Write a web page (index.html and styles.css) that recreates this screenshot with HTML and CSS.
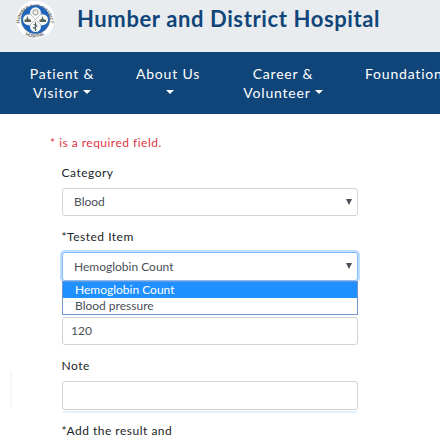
FILE: index.html
```html
<!DOCTYPE html>
<html lang="en">
<head>
<meta charset="utf-8">
<title>Humber and District Hospital</title>
<link rel="stylesheet" href="styles.css">
</head>
<body>
<header class="brand">
  <svg class="logo" viewBox="0 0 40 40" width="40" height="40" aria-hidden="true">
    <defs>
      <path id="arc-top" d="M5.200 26A15.400 15.400 0 1 1 34.800 26"/>
      <path id="arc-bottom" d="M9 33.200Q20 39.800 31 33.200"/>
    </defs>
    <circle cx="20.500" cy="18.500" r="19" fill="#fff"/>
    <text class="seal"><textPath href="#arc-top" startOffset="50%" text-anchor="middle">HUMBER AND DISTRICT</textPath></text>
    <text class="seal"><textPath href="#arc-bottom" startOffset="50%" text-anchor="middle">HOSPITAL</textPath></text>
    <circle cx="20.500" cy="18.500" r="14.300" fill="#1e66bd" stroke="#53697c" stroke-width=".6"/>
    <g fill="#f7f8f5">
      <circle cx="20.500" cy="11.800" r="5.500"/><circle cx="13.500" cy="18.700" r="5.500"/>
      <circle cx="27.500" cy="18.700" r="5.500"/><circle cx="20.500" cy="25.600" r="5.500"/>
      <path d="M16 14h9v9h-9z"/>
    </g>
    <path d="M14 12l13 13M27 12L14 25" stroke="#b4b9b5" stroke-width=".7"/>
    <circle cx="20.500" cy="11.300" r="2.600" fill="#eef0e8" stroke="#858e83" stroke-width=".9"/>
    <path d="M9.500 21v-2l2-1 1-3 1 3 2.500 1v2zM24.500 21v-2l2-1 1-3 1 3 2.500 1v2z" fill="#59665c"/>
    <path d="M20.500 21v9M18.500 23.500q4 0 3.500 1.500t-3 1.500 2.500 2" fill="none" stroke="#4f6565" stroke-width="1"/>
  </svg>
  <h1 class="title">Humber and District Hospital</h1>
</header>
<nav class="nav">
  <a class="item patient">Patient &amp;<br>Visitor<i class="caret"></i></a>
  <a class="item about">About Us<br><i class="caret alone"></i></a>
  <a class="item career">Career &amp;<br>Volunteer<i class="caret"></i></a>
  <a class="item foundation">Foundation</a>
</nav>
<main class="content">
  <div class="side-mark"></div>
  <p class="required">* is a required field.</p>
  <form class="form">
    <label class="label">Category</label>
    <div class="control select">Blood<i class="arrow"></i></div>
    <label class="label tested">*Tested Item</label>
    <div class="control select focused">Hemoglobin Count<i class="arrow"></i>
      <div class="menu">
        <div class="option active">Hemoglobin Count</div>
        <div class="option">Blood pressure</div>
      </div>
    </div>
    <div class="control result">120</div>
    <label class="label note">Note</label>
    <div class="control note-input"></div>
    <div class="underline"></div>
    <label class="label add">*Add the result and</label>
  </form>
</main>
</body>
</html>
```
FILE: styles.css
```css
* { box-sizing: border-box; }
body {
  margin: 0;
  width: 440px;
  height: 440px;
  overflow: hidden;
  background: #fff;
  color: #212529;
  font-family: Lato, "Liberation Sans", sans-serif;
}
.brand {
  display: flex;
  height: 52px;
  padding-left: 15px;
  background: #e9ecef;
}
.logo { flex: none; margin-top: 1px; }
.seal { font-size: 4.3px; font-weight: 700; fill: #51534a; }
.title {
  margin: 4px 0 0 22px;
  color: #104579;
  font-size: 22px;
  font-weight: 700;
  line-height: 30px;
  letter-spacing: .61px;
  white-space: nowrap;
}
.nav {
  display: flex;
  height: 62px;
  padding-top: 12px;
  background: #104579;
}
.item {
  flex: none;
  color: #fff;
  font-size: 14px;
  line-height: 19px;
  letter-spacing: .8px;
  text-align: center;
  white-space: nowrap;
}
.patient { width: 80px; margin-left: 22px; }
.about { width: 80px; margin-left: 26px; }
.career { width: 90px; margin-left: 30px; }
.foundation { margin-left: 37px; }
.caret {
  display: inline-block;
  margin-left: 4px;
  vertical-align: 4px;
  border: 4px solid transparent;
  border-top-color: #fff;
  border-bottom: 0;
}
.caret.alone { margin-left: 4px; }
.content { position: relative; height: 326px; padding: 21px 0 0 50px; }
.side-mark {
  position: absolute;
  left: 10px;
  top: 257px;
  width: 2px;
  height: 38px;
  background: #f7f7f8;
}
.required {
  margin: 0;
  color: #dc3545;
  font-size: 12px;
  line-height: 16px;
  letter-spacing: .48px;
}
.form { width: 296px; margin-left: 12px; padding-top: 14px; }
.label {
  display: block;
  height: 23px;
  margin-left: -.5px;
  font-size: 12px;
  line-height: 16px;
  letter-spacing: .5px;
  white-space: nowrap;
}
.control {
  position: relative;
  height: 28px;
  border: 1px solid #ced4da;
  border-radius: 3px;
  background: #fff;
  color: #495057;
  font-size: 12px;
  line-height: 26px;
}
.select { padding-left: 11px; }
.tested { height: 23px; margin-top: 13px; }
.focused {
  height: 29px;
  line-height: 28px;
  border-color: #80bdff;
  box-shadow: 0 0 0 2px #bfdeff;
}
.arrow {
  position: absolute;
  right: 5px;
  top: 10px;
  border: 3px solid transparent;
  border-top: 6px solid #495057;
  border-bottom: 0;
}
.menu {
  position: absolute;
  z-index: 1;
  left: -1px;
  right: -1px;
  top: 28px;
  height: 34px;
  border: 1px solid #7296cd;
  background: #fff;
}
.option { height: 16px; padding-left: 12px; line-height: 16px; }
.option.active { background: #1e90ff; color: #fff; }
.result { margin-top: 36px; padding-left: 8px; }
.note { margin-top: 13px; }
.note-input { height: 29px; }
.underline { height: 2px; margin: 1px 1px 0; background: #e3f2ff; }
.add { margin-top: 10px; }
```
